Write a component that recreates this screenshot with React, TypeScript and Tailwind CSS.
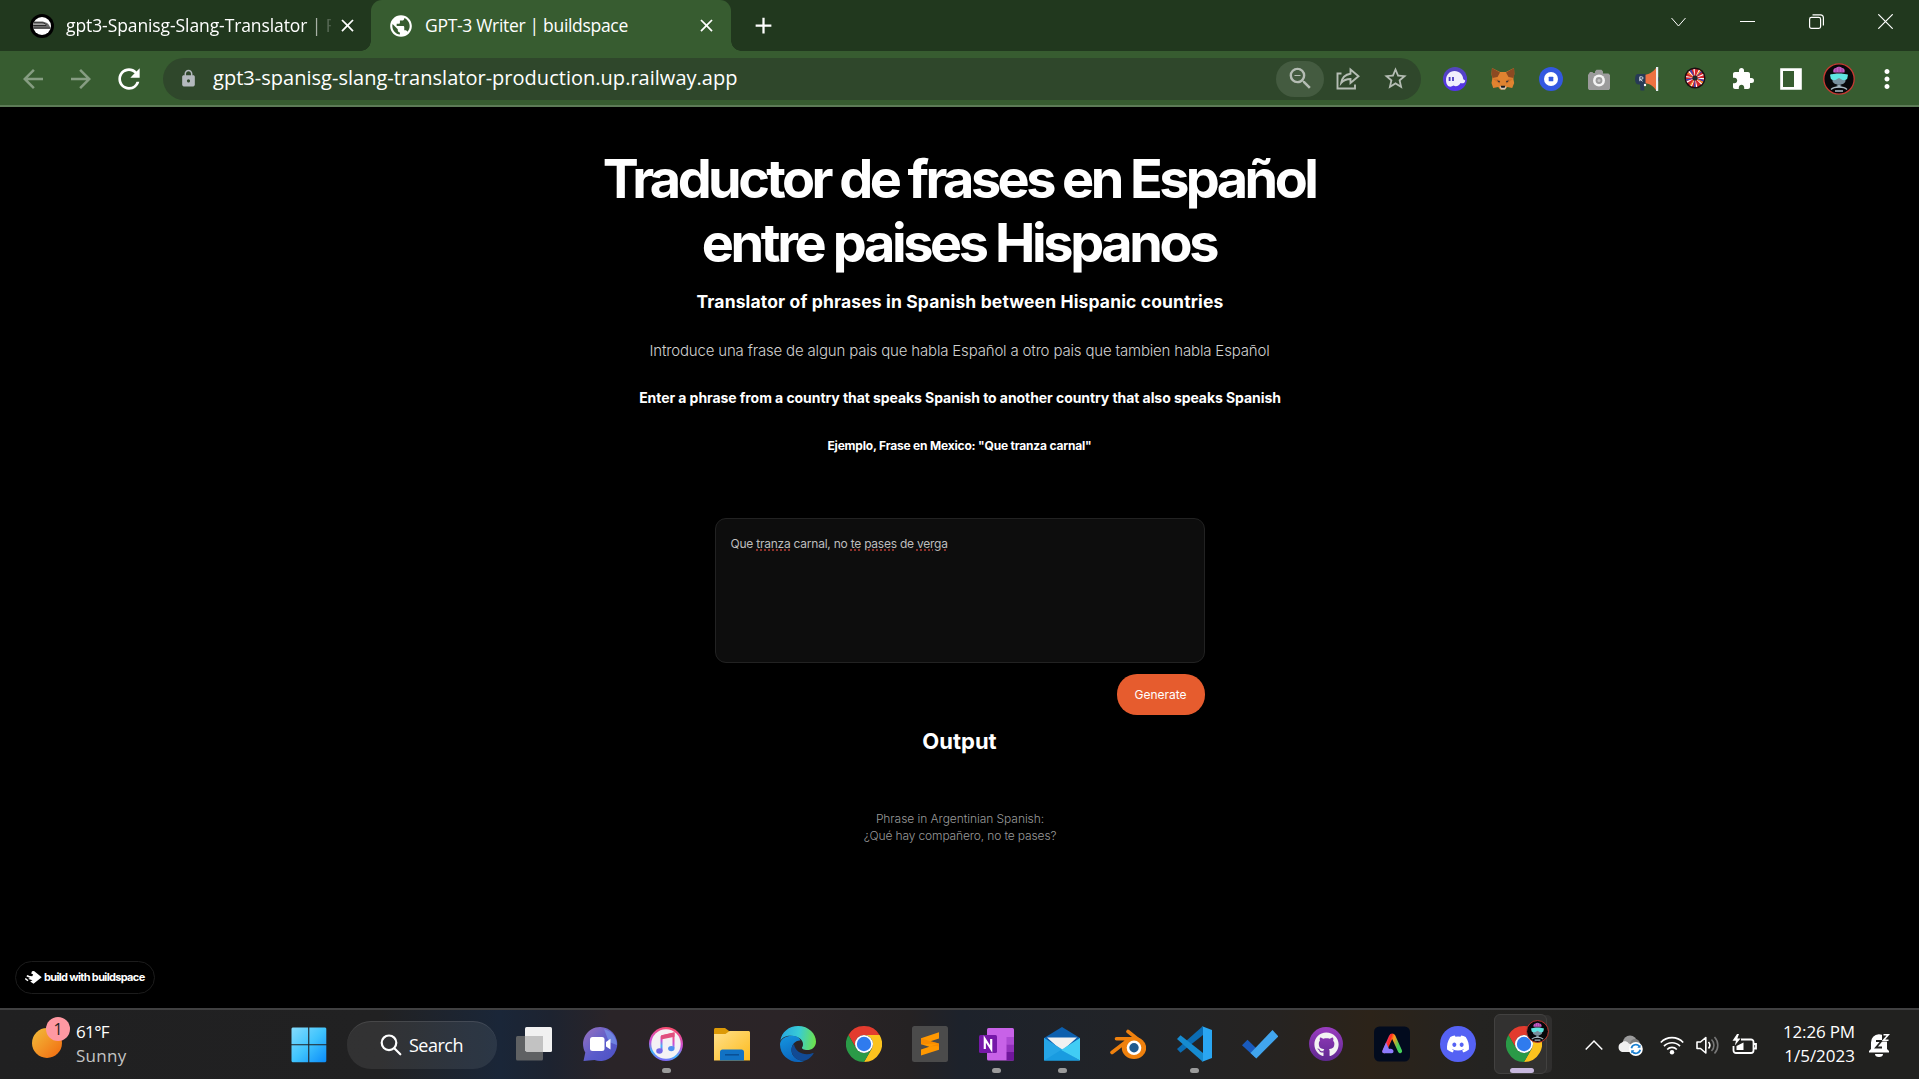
import React from "react";
import {
  MdAdd, MdArrowBack, MdArrowForward, MdClose, MdExtension, MdLock, MdMoreVert,
  MdPublic, MdRefresh, MdStarBorder, MdZoomOut,
} from "react-icons/md";
import { FaDiscord, FaGithub } from "react-icons/fa";

type Kids = { children: React.ReactNode };

/* ---------- Shared drawings ---------- */

function RobotAvatar({ className }: { className: string }) {
  return (
    <svg viewBox="0 0 32 32" className={className}>
      <circle cx="16" cy="16" r="15.2" fill="#07080b" stroke="#c83a33" strokeWidth="1.3" />
      <path d="M10.500 9.500c-.8-3 .8-4.600 2.800-4.800 1-1.300 4.400-1.300 5.400 0 2.200.2 3.600 1.800 2.800 4.800z" fill="#c45cc0" />
      <path d="M13 5.500v4M16 4.500v5M19 5.500v4" stroke="#8e3a92" strokeWidth=".8" />
      <path d="M9.500 11.500c0-1.500 13-1.500 13 0v6c0 2.500-2.500 4-6.500 4s-6.500-1.500-6.500-4z" fill="#78909e" />
      <path d="M7 11.800c2-1.300 16-1.300 18 0l-.8 4c-1 1.600-4.500 1.800-5.900.4L16 15l-2.300 1.200c-1.400 1.400-4.900 1.200-5.900-.4z" fill="#5fe6e2" />
      <path d="M14 21.500v3h4v-3" stroke="#33434e" strokeWidth="1" fill="#93a7b2" />
      <path d="M8 26.500c2-2 4.500-2.500 8-2.500s6 .5 8 2.500M12 28h8" stroke="#a9bac4" strokeWidth="1.400" fill="none" />
    </svg>
  );
}

function ChromeLogo() {
  return (
    <svg viewBox="0 0 36 36" className="size-9">
      <path d="M2.410 9A18 18 0 0 1 33.590 9H18a9 9 0 0 0-7.790 13.500z" fill="#e33b2e" />
      <path d="M33.590 9A18 18 0 0 1 18 36l7.790-13.500A9 9 0 0 0 18 9z" fill="#fcc31e" />
      <path d="M18 36A18 18 0 0 1 2.410 9l7.800 13.500A9 9 0 0 0 25.790 22.500z" fill="#2a9a47" />
      <circle cx="18" cy="18" r="9" fill="#fff" />
      <circle cx="18" cy="18" r="7.200" fill="#2f7bee" />
    </svg>
  );
}

/* ---------- Browser chrome ---------- */

function TabStrip() {
  return (
    <div className="flex h-[51px] shrink-0 bg-[#21381e] text-white">
      <div className="flex w-[371px] items-center pl-[30px]">
        <svg viewBox="0 0 24 24" className="size-6 shrink-0">
          <circle cx="12" cy="12" r="12" fill="#000" />
          <circle cx="12" cy="12" r="9" fill="#fff" />
          <path d="M4.300 7.500h6.500c5 0 8.500 2 9.500 6.700H3.200l-.2-3.400z" fill="#6a6a6a" />
          <path d="M3.500 8.800h8.500c3 .2 4.500 1.500 4 2.700H3.200" stroke="#2a2a2a" strokeWidth="1" fill="#a5a5a5" />
          <path d="M3.200 14.200h17.500" stroke="#222" strokeWidth="1" />
        </svg>
        <div className="mb-[2px] ml-3 w-[265px] whitespace-nowrap text-[17.5px] leading-6 tracking-[-0.09px] [mask-image:linear-gradient(to_right,#000_238px,transparent_270px)]">
          gpt3-Spanisg-Slang-Translator | R
        </div>
        <MdClose className="ml-[6px] size-[21px] shrink-0" />
      </div>
      <div className="relative flex w-[360px] items-center rounded-t-[11px] bg-[#375c30] pl-[17px]">
        <span className="absolute bottom-0 -left-[10px] size-[10px] bg-[radial-gradient(circle_at_0_0,transparent_9.5px,#375c30_10px)]" />
        <span className="absolute -right-[10px] bottom-0 size-[10px] bg-[radial-gradient(circle_at_100%_0,transparent_9.5px,#375c30_10px)]" />
        <MdPublic className="size-[26px] shrink-0" />
        <div className="mb-[2px] ml-[11px] w-[264px] whitespace-nowrap text-[17.5px] leading-6 tracking-[-0.31px]">GPT-3 Writer | buildspace</div>
        <MdClose className="ml-[7px] size-[21px] shrink-0" />
      </div>
      <div className="flex w-[64px] items-center justify-center">
        <MdAdd className="size-[27px]" />
      </div>
      <div className="flex grow items-center justify-end gap-[54px] pr-[26px] pb-[8px]">
        <svg viewBox="0 0 15 15" className="size-[15px]" fill="none" stroke="#fff" strokeWidth="1"><path d="M.5 4l7 8 7-8" /></svg>
        <svg viewBox="0 0 15 15" className="size-[15px]" stroke="#fff" strokeWidth="1"><path d="M0 7.500h15" /></svg>
        <svg viewBox="0 0 15 15" className="size-[15px]" fill="none" stroke="#fff" strokeWidth="1.200"><rect x=".6" y="3.400" width="11" height="11" rx="1.800" /><path d="M3.500 .8H11.500A3 3 0 0 1 14.400 3.700V11.500" /></svg>
        <svg viewBox="0 0 15 15" className="size-[15px]" stroke="#fff" strokeWidth="1.200"><path d="M.3 .3l14.400 14.400M14.700 .3L.3 14.700" /></svg>
      </div>
    </div>
  );
}

function Extensions() {
  return (
    <div className="ml-[22px] flex items-center gap-6">
      <svg viewBox="0 0 24 24" className="size-6">
        <defs><linearGradient id="ph" x1="0" y1="0" x2="0" y2="1"><stop offset="0" stopColor="#5347b8" /><stop offset="1" stopColor="#5531f0" /></linearGradient></defs>
        <circle cx="12" cy="12" r="12" fill="url(#ph)" />
        <path d="M3 13C3 8 6.500 4 11.500 4c5.200 0 8.500 3.800 8.800 8.300l1.900 1.200c0 2.600-2.700 3.300-4.700 2.500-1 2.800-4.500 4-7 2.600C6.500 21.500 3 18.500 3 13z" fill="#f1eefc" />
        <path d="M6.600 10v4M10 10v4" stroke="#4b3bbf" strokeWidth="1.800" />
      </svg>
      <svg viewBox="0 0 24 24" className="size-6">
        <path d="M1 1l8 4h6l8-4 .3 6-1 4.500.9 4.500-2 5-5-1-2 2.500h-5L7.200 20l-5 1-1.700-5 .8-4.500L.5 7z" fill="#e08330" />
        <path d="M1 1l8 4.500L6.500 10l-5 1L.5 7zM23 1l-8 4.500 2.500 4.500 5 1 1-4z" fill="#8b4a22" />
        <path d="M1.300 11.500l5 .2 3 2.300-.5 3zM22.700 11.500l-5 .2-3 2.300.5 3z" fill="#d3742a" />
        <path d="M6 13.500l3 .5-.8 1.800zM18 13.500l-3 .5.8 1.800z" fill="#2b2f38" />
        <path d="M8.500 19.500h7l-1.500 3h-4z" fill="#d6c8bb" /><path d="M9.800 18.800h4.400l-.5 2h-3.400z" fill="#16181d" />
      </svg>
      <svg viewBox="0 0 24 24" className="size-6">
        <circle cx="12" cy="12" r="12" fill="#3358e0" /><circle cx="12" cy="12" r="7" fill="#fff" /><rect x="9.700" y="9.700" width="4.600" height="4.600" rx=".6" fill="#3358e0" />
      </svg>
      <svg viewBox="0 0 24 24" className="size-6">
        <path d="M2 6.500L3 5h2.500l.8 1H8V4.500l1.500-1.800h5L16 4.500V6.500h5.500L23 8v13.500L22 23H2l-1-1.500V8z" fill="#9b9b9b" />
        <circle cx="12" cy="13.500" r="6" fill="#f3f3f3" /><circle cx="12" cy="13.500" r="3.400" fill="#9b9b9b" /><circle cx="12" cy="13.500" r="1.500" fill="#c5c5c5" />
      </svg>
      <svg viewBox="0 0 24 24" className="size-6">
        <rect x="22" y="10" width="2" height="4.500" rx="1" fill="#24324a" />
        <path d="M9.500 8C15 7 19 4 21 1v22c-2-3-5-6-11.500-7z" fill="#ee7142" />
        <path d="M21 0h2.200v24H21z" fill="#e9eef2" />
        <path d="M3 7h7.500v10.500H9.300v6H5.500L5 17.500H3.500C1.500 17.500 0 15.500 0 12.200S1.200 7 3 7z" fill="#273a56" />
        <path d="M4.800 14.200V9.800h2a1.200 1.200 0 0 1 0 2.400h-2l2.800 2.100" stroke="#e4e8ee" fill="none" strokeWidth=".9" />
        <circle cx="10" cy="18" r="1.200" fill="#fff" />
      </svg>
      <svg viewBox="0 0 24 24" className="size-6">
        <circle cx="12" cy="11" r="10.500" fill="#1c0f12" />
        <g fill="none" strokeWidth="7">
          <circle cx="12" cy="11" r="5.500" stroke="#d8262b" />
          <circle cx="12" cy="11" r="5.500" stroke="#fff" strokeDasharray=".9 2.556" />
          <circle cx="12" cy="11" r="5.500" stroke="#2848c8" strokeDasharray="1 5.910" strokeDashoffset="-1.200" />
          <circle cx="12" cy="11" r="5.500" stroke="#f0922a" strokeDasharray=".9 7.730" strokeDashoffset="-2.400" />
        </g>
        <circle cx="12" cy="11" r="2.600" fill="#1d2a28" />
      </svg>
      <MdExtension className="size-6 text-white" />
      <svg viewBox="0 0 24 24" className="size-6"><path fillRule="evenodd" d="M1.200 1.200h21.600v21.600H1.200zM4 4v16h11V4z" fill="#fff" /></svg>
      <div className="-mx-1"><RobotAvatar className="size-8" /></div>
      <MdMoreVert className="-mx-[3px] size-[30px] text-white" />
    </div>
  );
}

function Toolbar() {
  return (
    <div className="flex h-14 shrink-0 items-center border-b-2 border-[#5d7b57] bg-[#375c30] pt-px">
      <MdArrowBack className="ml-[18px] size-[30px] text-[#869d82]" />
      <MdArrowForward className="ml-[18px] size-[30px] text-[#869d82]" />
      <MdRefresh className="ml-[17px] size-8 text-white" />
      <div className="ml-[18px] flex h-[42px] w-[1258px] items-center rounded-full bg-[#2f472b] pr-[12px] pl-4">
        <MdLock className="size-[19px] text-[#b3b9bd]" />
        <div className="mb-px ml-[15px] grow whitespace-nowrap text-[20px] leading-7 text-white tracking-[0.02px]">
          gpt3-spanisg-slang-translator-production.up.railway.app
        </div>
        <div className="flex h-9 w-12 items-center justify-center rounded-full bg-[#445b40]">
          <MdZoomOut className="size-[29px] text-[#b5bdb4]" />
        </div>
        <svg viewBox="0 0 24 24" className="ml-3 size-6" fill="none" stroke="#b5bdb4" strokeWidth="1.900">
          <path d="M5.500 6.500H1.500V21.500H19V17.500" />
          <path d="M14.500 2.500L22.500 9.300L14.500 16V12C10.500 12 7.500 13.200 5.200 16C6 11 9 7.400 14.500 6.700Z" />
        </svg>
        <MdStarBorder className="ml-[22px] size-[27px] text-[#b5bdb4]" />
      </div>
      <Extensions />
    </div>
  );
}

/* ---------- Page ---------- */

function Typo({ children }: Kids) {
  return <span className="underline decoration-[#8f322b] decoration-dotted decoration-[1.5px] underline-offset-[1px]">{children}</span>;
}

function Page() {
  return (
    <main className='flex h-[901px] shrink-0 flex-col items-center bg-black pt-10 text-center font-["Inter",sans-serif] text-white'>
      <h1 className="mr-px whitespace-nowrap text-[54px] leading-16 font-bold">
        <span className="block tracking-[-3.57px]">Traductor de frases en Español</span>
        <span className="block tracking-[-3.38px]">entre paises Hispanos</span>
      </h1>
      <h3 className="mt-[15px] ml-px text-[17.5px] leading-6 font-bold tracking-[0.137px]">Translator of phrases in Spanish between Hispanic countries</h3>
      <p className="mt-[27px] text-[15px] leading-5 font-light tracking-[-0.17px] text-[#d0d0d0]">
        Introduce una frase de algun pais que habla Español a otro pais que tambien habla Español
      </p>
      <p className="mt-[27px] ml-px text-[14px] leading-5 font-bold tracking-[-0.068px]">
        Enter a phrase from a country that speaks Spanish to another country that also speaks Spanish
      </p>
      <p className="mt-[30px] text-[12px] leading-4 font-bold tracking-[-0.19px]">Ejemplo, Frase en Mexico: "Que tranza carnal"</p>
      <div className="mt-16 h-[145px] w-[490px] rounded-[11px] border border-[#222] bg-[#0d0d0d] px-[15px] pt-[17px] text-left text-[12px] leading-4 tracking-[-0.235px] text-[#bdbdbd]">
        Que <Typo>tranza</Typo> carnal, no <Typo>te</Typo> <Typo>pases</Typo> de <Typo>verga</Typo>
      </div>
      <div className="mt-[11px] flex w-[490px] justify-end">
        <button className="h-[41px] w-[88px] rounded-[20px] bg-[#e65c2e] text-[12px]">Generate</button>
      </div>
      <h3 className="mt-3 text-[22px] leading-7 font-bold">Output</h3>
      <p className="mt-[55px] ml-px text-[12px] leading-[17px] font-light text-[#9a9a9a]">
        <span className="block tracking-[-0.06px]">Phrase in Argentinian Spanish:</span>
        <span className="block tracking-[-0.13px]">¿Qué hay compañero, no te pases?</span>
      </p>
      <div className="mt-auto mb-[14px] ml-[15px] flex h-[33px] w-[140px] items-center self-start rounded-full border border-[#1c1c1c] pl-[9px]">
        <svg viewBox="0 0 17 13" className="h-[13px] w-[17px]">
          <path d="M7 .3L9 0l7.700 6.300L8.500 12.800 5.200 10.500l2.300-1.300L3.200 8l1.600-1L2.500 4.800l4.700.4 1-1.600-2-1z" fill="#fff" />
          <path d="M.3 7.500l2.700 2.300M1.800 4.800l2.500 1" stroke="#fff" strokeWidth="1.500" />
        </svg>
        <span className="ml-[2px] whitespace-nowrap text-[11px] font-bold tracking-[-0.66px]">build with buildspace</span>
      </div>
    </main>
  );
}

/* ---------- Taskbar ---------- */

function AppCell({ children, running }: Kids & { running?: boolean }) {
  return (
    <div className="flex h-full w-[66px] flex-col items-center pt-4">
      <div className="size-9">{children}</div>
      {running && <span className="mt-[6px] h-[5px] w-[9px] rounded-full bg-[#9b9b9b]" />}
    </div>
  );
}

function TaskbarApps() {
  return (
    <div className="ml-1 flex h-full">
      <AppCell>
        <svg viewBox="0 0 36 36" className="size-9">
          <rect x="9" y="1" width="27" height="25" rx="1.500" fill="#f1f1f1" />
          <rect x="0" y="10" width="27" height="24.500" rx="1.500" fill="#5f6163" />
          <path d="M9 10h18v16H10.500L9 24.500z" fill="#c2c2c2" />
        </svg>
      </AppCell>
      <AppCell>
        <svg viewBox="0 0 36 36" className="size-9">
          <defs><linearGradient id="ct" x1="0" y1="0" x2="1" y2="1"><stop offset="0" stopColor="#9a72bd" /><stop offset=".55" stopColor="#5a5ccb" /><stop offset="1" stopColor="#4c50c4" /></linearGradient></defs>
          <path d="M18 1a17 17 0 1 1-5.500 33L1.500 35l1.800-8.500A17 17 0 0 1 18 1z" fill="url(#ct)" />
          <path d="M22 3a17 17 0 0 1 12.900 16L27 16z" fill="#7d9ff0" opacity=".6" />
          <rect x="8" y="11" width="14.500" height="14" rx="2.500" fill="#fff" /><path d="M24 16l4.500-3.200v10.600L24 20.500z" fill="#fff" />
        </svg>
      </AppCell>
      <AppCell running>
        <svg viewBox="0 0 36 36" className="size-9">
          <defs>
            <linearGradient id="it" x1=".6" y1="0" x2=".4" y2="1"><stop offset="0" stopColor="#fb4c6a" /><stop offset=".5" stopColor="#c94fd8" /><stop offset=".8" stopColor="#3fb4fb" /><stop offset="1" stopColor="#8a5cf5" /></linearGradient>
          </defs>
          <circle cx="18" cy="18" r="17" fill="url(#it)" /><circle cx="18" cy="18" r="14.700" fill="#f4f2f5" />
          <path d="M13.500 10.200l12-2.700v14.800M13.500 10.200v15" stroke="url(#it)" strokeWidth="2" fill="none" />
          <path d="M13 9.500l13.500-3v4.200L13 13.600z" fill="#e0507f" />
          <ellipse cx="11.400" cy="25" rx="3.200" ry="2.700" fill="#7267e8" /><ellipse cx="23.300" cy="22.600" rx="3.200" ry="2.700" fill="#4f8ef0" />
        </svg>
      </AppCell>
      <AppCell>
        <svg viewBox="0 0 36 36" className="size-9">
          <defs><linearGradient id="fo" x1="0" y1="0" x2="1" y2="1"><stop offset="0" stopColor="#ffe08a" /><stop offset="1" stopColor="#fdbb1d" /></linearGradient></defs>
          <path d="M0 3.500C0 2.700.7 2 1.500 2H11l4 3v5H0z" fill="#dc9906" />
          <path d="M0 8h11.500L15.500 5H34.500c.8 0 1.500.7 1.500 1.500V34.500H0z" fill="url(#fo)" />
          <path d="M6 34.500V26c0-1.500 1-2.500 2.500-2.500h19c1.500 0 2.500 1 2.500 2.500v8.500z" fill="#1172c4" />
          <path d="M11 28.800h14" stroke="#0a4f94" strokeWidth="1.500" />
        </svg>
      </AppCell>
      <AppCell>
        <svg viewBox="0 0 36 36" className="size-9">
          <defs>
            <linearGradient id="e1" x1="0" y1=".4" x2="1" y2=".5"><stop offset="0" stopColor="#27a7e0" /><stop offset=".5" stopColor="#38cbd6" /><stop offset="1" stopColor="#6de24b" /></linearGradient>
            <linearGradient id="e2" x1="0" y1="0" x2=".4" y2="1"><stop offset="0" stopColor="#1496e0" /><stop offset="1" stopColor="#0c66bd" /></linearGradient>
          </defs>
          <path d="M.3 15C1.500 6 9 0 18 0c11 0 18 8 18 15.500 0 6-4.500 8.500-8.500 8.500-4 0-6-1.500-5.500-2.500 2-2.500 1.500-8-5-10.500C10.500 8.500 3 9.500.3 15z" fill="url(#e1)" />
          <path d="M20.500 14.500C19 10.500 15 9.800 11.500 9.800 5.500 9.800 0 13.500 0 18.500 0 28.500 8.500 36 18 36c3 0 5-.5 7-1.500-7 1-13.500-4-13.500-10.500 0-5.500 4-10 9-9.500z" fill="url(#e2)" />
          <path d="M14 18c-2.500 2-3 5-2.300 8 1.500 6 7.500 10 14.300 8.200 3.500-1.500 6-4 7.600-6.700.2-.5-.2-.8-.8-.5-6.800 3-17.500.5-18.800-9z" fill="#114a94" />
        </svg>
      </AppCell>
      <AppCell><ChromeLogo /></AppCell>
      <AppCell>
        <svg viewBox="0 0 36 36" className="size-9">
          <rect width="36" height="36" rx="2.500" fill="#4b4b4b" />
          <path d="M9 12.200L27 6.300v6.200L18.500 15.200 27 17.500v6.300L9 29.600v-6.200L17.300 20.700 9 18.300z" fill="#ff9800" />
          <path d="M9 18.300l18-.8-8.500-2.300L9 12.200zM17.300 20.700L27 17.500v3.200l-3-1z" fill="#f08200" opacity=".55" />
        </svg>
      </AppCell>
      <AppCell running>
        <svg viewBox="0 0 36 36" className="size-9">
          <rect x="9" y="2" width="27" height="32.500" rx="1.500" fill="#c862e8" />
          <path d="M28.500 11H36v7.500h-7.500z" fill="#ad49d3" /><path d="M28.500 18.500H36V26h-7.500z" fill="#9230bb" /><path d="M28.500 26H36v8.500h-7.500z" fill="#70169c" />
          <rect x="1" y="9" width="18" height="18" rx="1.500" fill="#7618a8" />
          <path d="M6.800 23V13l6.400 10V13" stroke="#fff" strokeWidth="2.200" fill="none" />
        </svg>
      </AppCell>
      <AppCell running>
        <svg viewBox="0 0 36 36" className="size-9">
          <path d="M0 12L18 1l18 11v8H0z" fill="#0c5fae" /><path d="M3 11.500h30L18 25z" fill="#f1f1f1" />
          <path d="M0 12l18 12-18 9z" fill="#29a9ea" /><path d="M0 12l36 22.500H0z" fill="#25a5e6" /><path d="M36 12L17 24l19 10.500z" fill="#41cdf5" /><path d="M17 24l19 10.500H0z" fill="#199be0" />
        </svg>
      </AppCell>
      <AppCell>
        <svg viewBox="0 0 36 36" className="size-9" fill="none">
          <path d="M6.500 12.800H22M18 5.500l12.500 9.800M2 26.500L19 13.500" stroke="#ef810e" strokeWidth="3.600" strokeLinecap="round" />
          <ellipse cx="24" cy="22" rx="12.200" ry="11" fill="#ef810e" />
          <circle cx="24" cy="21.800" r="7.300" fill="#fff" /><circle cx="24" cy="21.800" r="4.700" fill="#215a8e" />
        </svg>
      </AppCell>
      <AppCell running>
        <svg viewBox="0 0 36 36" className="size-9">
          <path d="M1 23l3.500 3.800L27 9V0z" fill="#0b6cb3" /><path d="M1 13l3.500-3.800L27 27v9z" fill="#168bd0" />
          <path d="M25.500 0L36 4v28l-10.500 4c1 0 1.500-.7 1.500-1.500v-33C27 .7 26.500 0 25.500 0z" fill="#2aa6f2" />
        </svg>
      </AppCell>
      <AppCell>
        <svg viewBox="0 0 36 36" className="size-9">
          <path d="M0 19.200l5.500-5.500 11 10.800-3.500 6.800z" fill="#195abd" /><path d="M8.500 27L30.500 4l5.800 6.400L14.300 32.500z" fill="#41a5ee" />
        </svg>
      </AppCell>
      <AppCell>
        <div className="ml-px flex size-[34px] translate-y-px items-center justify-center rounded-full bg-linear-to-b from-[#9a3cc0] to-[#5f2890]"><FaGithub className="size-[25px] text-[#f3f3f3]" /></div>
      </AppCell>
      <AppCell>
        <svg viewBox="0 0 36 36" className="size-9">
          <defs><linearGradient id="ad" x1="0" y1="0" x2="1" y2=".3"><stop offset="0" stopColor="#ec4fd0" /><stop offset=".4" stopColor="#ff2a20" /><stop offset=".6" stopColor="#ff9b1c" /><stop offset="1" stopColor="#45d05a" /></linearGradient></defs>
          <rect y=".5" width="36" height="35" rx="5.500" fill="#020b1e" />
          <path d="M10.500 25L17 10.500c.6-1.300 1.800-1.300 2.400 0L26 25" stroke="url(#ad)" strokeWidth="4.200" fill="none" strokeLinecap="round" />
          <path d="M8.500 24.500l3.500-8 3 6.500c2-1 4.500.2 4.500 2.200s-1.500 2-3 2H10c-1.500 0-2.200-1.200-1.500-2.700z" fill="#8d7bff" />
        </svg>
      </AppCell>
      <AppCell>
        <div className="flex size-9 items-center justify-center rounded-full bg-[#5562f4]"><FaDiscord className="size-6 text-white" /></div>
      </AppCell>
      <div className="flex h-full items-start pt-1 pl-[3px]">
        <div className="relative flex h-[60px] w-[53px] flex-col items-center rounded-[6px] border border-[#424140] bg-[#323130] pt-[11px] pl-[6px] shadow-[6px_0_0_-1px_#302f2e]">
          <ChromeLogo />
          <span className="absolute top-[5px] left-[31px]"><RobotAvatar className="size-[23px]" /></span>
          <span className="absolute bottom-0 left-[15px] h-[5px] w-6 rounded-full bg-[#c8b8de]" />
        </div>
      </div>
    </div>
  );
}

function Tray() {
  return (
    <div className="ml-auto flex items-center">
      <svg viewBox="0 0 18 12" className="h-3 w-[18px]" fill="none" stroke="#fff" strokeWidth="1.500"><path d="M.7 10.500L9 2l8.300 8.500" /></svg>
      <svg viewBox="0 0 26 22" className="ml-[14px] h-[22px] w-[26px]">
        <circle cx="13" cy="8.500" r="7" fill="#9b9b9b" /><circle cx="18" cy="10" r="5" fill="#7d7d7d" />
        <path d="M5 18a5 5 0 0 1 0-9.500c1.200-1.800 5-1.600 6.500.8L16 12v6z" fill="#f0f0f0" />
        <circle cx="18.800" cy="15" r="7" fill="#fff" />
        <path d="M14.400 14.200a4.500 4.500 0 0 1 8-1.700M23.200 15.800a4.500 4.500 0 0 1-8 1.700" stroke="#1a7fd0" strokeWidth="1.700" fill="none" />
        <path d="M23.500 10.500v3.200h-3.200zM14.200 19.500v-3.200h3.200z" fill="#1a7fd0" />
      </svg>
      <svg viewBox="0 0 24 20" className="ml-[17px] h-5 w-6" fill="none" stroke="#fff" strokeWidth="1.700">
        <path d="M.8 7.500a15.500 15.500 0 0 1 22.400 0M4 11.200a11 11 0 0 1 16 0M7.200 14.500a6.700 6.700 0 0 1 9.600 0" /><circle cx="12" cy="17.300" r="2.200" fill="#fff" stroke="none" />
      </svg>
      <svg viewBox="0 0 24 20" className="ml-3 h-5 w-6" fill="none" strokeWidth="1.600">
        <path d="M1 7v6.500h3.500L9.800 18V2.500L4.500 7z" stroke="#fff" strokeLinejoin="round" /><path d="M12.500 7a5 5 0 0 1 0 6.500" stroke="#fff" /><path d="M15.500 4.500a8 8 0 0 1 0 11.500M18.500 2a12 12 0 0 1 0 16.500" stroke="#777" />
      </svg>
      <svg viewBox="0 0 25 22" className="ml-3 h-[22px] w-[25px]" fill="none" stroke="#fff" strokeWidth="1.800">
        <path d="M9 5.500h10a2.500 2.500 0 0 1 2.500 2.500v8.500a2.500 2.500 0 0 1-2.500 2.500H4a2.500 2.500 0 0 1-2.500-2.500V12" /><path d="M22 10h2v4.500h-2" />
        <path d="M4.500 16v-4l7-3.500v7.500z" fill="#fff" stroke="none" /><path d="M5 0L.5 6.800H4L2.800 11.500 8.500 4.500H5.300L7 0z" fill="#fff" stroke="none" />
      </svg>
      <div className="mb-[2px] ml-[25px] w-[73px] text-right text-[17px] leading-6">
        <div className="tracking-[-0.16px]">12:26 PM</div>
        <div>1/5/2023</div>
      </div>
      <svg viewBox="0 0 22 24" className="mr-[29px] ml-[13px] h-6 w-[22px]">
        <path d="M1 19.500V18l2-2V9.500a8 8 0 0 1 16-.5v7l2 2v1.500z" fill="#fff" /><path d="M7 21h8a4 3 0 0 1-8 0z" fill="#fff" />
        <path d="M8 8h5.500L8 14.500h6" stroke="#21211f" strokeWidth="1.800" fill="none" />
        <path d="M14 .5h8v8h-8z" fill="#21211f" /><path d="M15.500 1.800h4.800l-4.800 5.400h5" stroke="#fff" strokeWidth="1.600" fill="none" />
      </svg>
    </div>
  );
}

function Taskbar() {
  return (
    <footer className="flex h-[71px] shrink-0 items-center border-t-2 border-[#404041] bg-[linear-gradient(90deg,#202021_0px,#212122_380px,#1a2638_500px,#1d2330_550px,#2a2428_610px,#2b2427_790px,#252223_910px,#1d222b_960px,#212327_1120px,#262321_1280px,#2c2319_1370px,#242321_1480px,#21211f_1600px)] text-white">
      <div className="relative mt-[18px] ml-8 size-[30px] self-start rounded-full bg-linear-to-br from-[#f0bd3a] to-[#f0660a]">
        <span className="absolute -top-[11px] left-[14px] flex size-6 items-center justify-center rounded-full bg-[#ff98a2] text-[16px] text-[#222]">1</span>
      </div>
      <div className="mb-[2px] ml-[14px] w-[60px] text-[17px] leading-6">
        <div className="tracking-[-0.62px]">61°F</div>
        <div className="tracking-[0.3px] text-[#c4c4c4]">Sunny</div>
      </div>
      <svg viewBox="0 0 36 36" className="ml-[155px] size-9">
        <defs><linearGradient id="wn" x1="0" y1="0" x2="1" y2="1"><stop offset="0" stopColor="#85dcfd" /><stop offset=".5" stopColor="#40c4fd" /><stop offset="1" stopColor="#0a8cfa" /></linearGradient></defs>
        <path d="M1.500 .5h15.700v16.700H.5V1.500zM18.300 .5h16l1 1v15.700h-17zM.5 18.300h16.700v17H1.500l-1-1zM18.300 18.300h17v16l-1 1h-16z" fill="url(#wn)" />
      </svg>
      <div className="ml-5 flex h-12 w-[150px] items-center rounded-full border-t border-white/10 bg-white/8 pl-[33px]">
        <svg viewBox="0 0 22 22" className="size-[22px]" fill="none" stroke="#fff" strokeWidth="2.200" strokeLinecap="round"><circle cx="9" cy="8.800" r="7.300" /><path d="M14.300 14.300L20.300 20.300" /></svg>
        <span className="mb-px ml-[7px] text-[18px] leading-6 tracking-[-0.5px]">Search</span>
      </div>
      <TaskbarApps />
      <Tray />
    </footer>
  );
}

export default function App() {
  return (
    <div className='flex h-[1079px] w-[1919px] flex-col overflow-hidden bg-black font-["Open_Sans",sans-serif]'>
      <TabStrip />
      <Toolbar />
      <Page />
      <Taskbar />
    </div>
  );
}
